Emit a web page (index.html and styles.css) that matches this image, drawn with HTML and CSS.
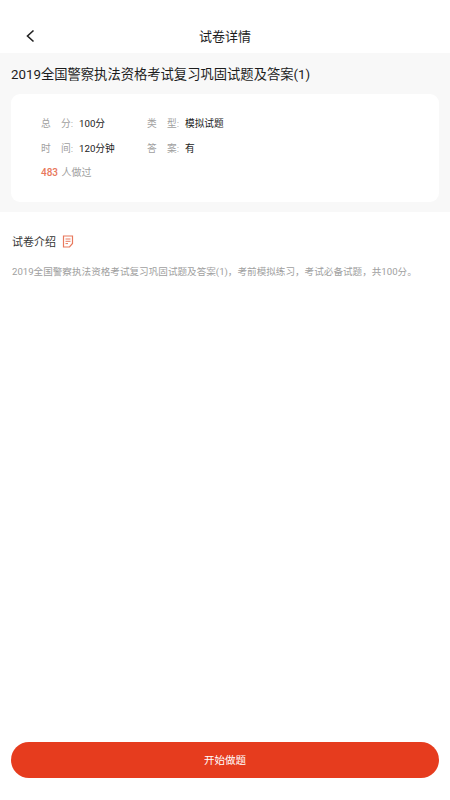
FILE: index.html
```html
<!DOCTYPE html>
<html lang="zh-CN">
<head>
    <meta charset="UTF-8">
    <meta name="viewport" content="width=device-width, initial-scale=1.0">
    <title>试卷详情</title>
    <link rel="stylesheet" href="styles.css">
</head>
<body>
    <div class="page">
        <div class="header">
            <svg class="back" width="12" height="16" viewBox="0 0 12 16">
                <path d="M9.5 2.5 L3.5 8 L9.5 13.5" fill="none" stroke="#222" stroke-width="1.6"/>
            </svg>
            <div class="header-title">试卷详情</div>
        </div>
        <div class="summary">
            <div class="paper-title">2019全国警察执法资格考试复习巩固试题及答案(1)</div>
            <div class="card">
                <div class="info-row">
                    <div class="info-item">
                        <div class="label"><span>总</span><span>分:</span></div>
                        <div class="value">100分</div>
                    </div>
                    <div class="info-item">
                        <div class="label"><span>类</span><span>型:</span></div>
                        <div class="value">模拟试题</div>
                    </div>
                </div>
                <div class="info-row">
                    <div class="info-item">
                        <div class="label"><span>时</span><span>间:</span></div>
                        <div class="value">120分钟</div>
                    </div>
                    <div class="info-item">
                        <div class="label"><span>答</span><span>案:</span></div>
                        <div class="value">有</div>
                    </div>
                </div>
                <div class="done"><span class="done-count">483</span> 人做过</div>
            </div>
        </div>
        <div class="intro">
            <div class="intro-title">
                <span>试卷介绍</span>
                <svg width="12" height="13" viewBox="0 0 12 13">
                    <path d="M1.5 1 H10.5 V8.5 L7.5 12 H1.5 Z" fill="none" stroke="#e8785c" stroke-width="1.2"/>
                    <path d="M3.5 4 H8.5 M3.5 6.3 H8.5 M3.5 8.6 H6" fill="none" stroke="#e8785c" stroke-width="1"/>
                </svg>
            </div>
            <div class="intro-text">2019全国警察执法资格考试复习巩固试题及答案(1)，考前模拟练习，考试必备试题，共100分。</div>
        </div>
        <div class="footer">
            <div class="start-btn">开始做题</div>
        </div>
    </div>
</body>
</html>
```
FILE: styles.css
```css
* {
    margin: 0;
    padding: 0;
    box-sizing: border-box;
}
body {
    background: #ffffff;
    font-family: Roboto, "Noto Sans CJK SC", sans-serif;
    color: #1c1c1c;
}
.page {
    display: flex;
    flex-direction: column;
    height: 800px;
}
.header {
    position: relative;
    height: 53px;
    padding-top: 23px;
    text-align: center;
}
.back {
    position: absolute;
    left: 24px;
    top: 28px;
}
.header-title {
    font-size: 13px;
    line-height: 28px;
}
.summary {
    height: 159px;
    padding: 0 11px;
    background: #f8f8f8;
}
.paper-title {
    height: 41px;
    font-size: 13.3px;
    line-height: 43px;
}
.card {
    height: 108px;
    padding: 18px 30px 0;
    border-radius: 9px;
    background: #ffffff;
}
.info-row {
    display: flex;
    height: 24.5px;
    font-size: 9.7px;
    line-height: 24.5px;
}
.info-item {
    display: flex;
    width: 106px;
}
.label {
    display: flex;
    justify-content: space-between;
    width: 32px;
    margin-right: 6px;
    color: #a0a0a0;
}
.value {
    color: #222222;
}
.done {
    font-size: 10px;
    line-height: 24.5px;
    color: #a0a0a0;
}
.done-count {
    margin-right: 1px;
    color: #e8785c;
    font-weight: 500;
}
.intro {
    flex: 1;
    padding: 0 12px;
}
.intro-title {
    display: flex;
    align-items: center;
    gap: 6px;
    margin-top: 20px;
    height: 18px;
    font-size: 11px;
    color: #333333;
}
.intro-text {
    margin-top: 14px;
    font-size: 9.6px;
    line-height: 16px;
    color: #a0a0a0;
    white-space: nowrap;
}
.footer {
    height: 58px;
    padding: 0 11px;
}
.start-btn {
    height: 36px;
    border-radius: 18px;
    background: #e63c1e;
    color: #ffffff;
    font-size: 10.5px;
    line-height: 38px;
    text-align: center;
}
```
